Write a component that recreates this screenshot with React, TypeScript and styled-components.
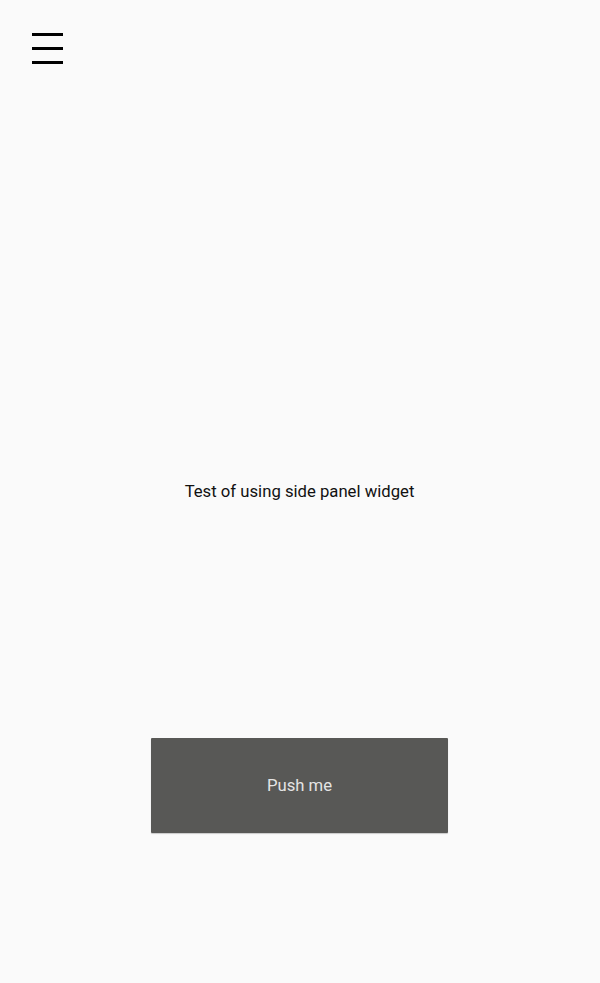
import React from "react";
import styled, { createGlobalStyle } from "styled-components";

const GlobalStyle = createGlobalStyle`
  html, body {
    margin: 0;
    padding: 0;
    background: #fafafa;
    font-family: Roboto, "Noto Sans", sans-serif;
  }
`;

const Page = styled.div`
  display: flex;
  flex-direction: column;
  height: 983px;
  background: #fafafa;
`;

const TopBar = styled.div`
  display: flex;
  padding: 33px 0 0 32px;
`;

const MenuButton = styled.button`
  display: flex;
  flex-direction: column;
  justify-content: space-between;
  width: 31px;
  height: 31px;
  padding: 0;
  border: none;
  background: transparent;
  cursor: pointer;
`;

const MenuLine = styled.span`
  display: block;
  width: 31px;
  height: 3px;
  background: #000;
`;

const Content = styled.div`
  display: flex;
  flex-direction: column;
  align-items: center;
  padding-right: 1px;
`;

const Message = styled.div`
  margin-top: 418px;
  height: 20px;
  line-height: 20px;
  font-size: 16.7px;
  color: #111;
`;

const PushButton = styled.button`
  margin-top: 236px;
  width: 297px;
  height: 95px;
  border: none;
  border-radius: 1px;
  background: #585856;
  color: #e4e4e4;
  font-family: Roboto, "Noto Sans", sans-serif;
  font-size: 16.7px;
  box-shadow: 0 1px 1px rgba(0, 0, 0, 0.2);
  cursor: pointer;
`;

export default function App() {
  return (
    <>
      <GlobalStyle />
      <Page>
        <TopBar>
          <MenuButton aria-label="menu">
            <MenuLine />
            <MenuLine />
            <MenuLine />
          </MenuButton>
        </TopBar>
        <Content>
          <Message>Test of using side panel widget</Message>
          <PushButton>Push me</PushButton>
        </Content>
      </Page>
    </>
  );
}
